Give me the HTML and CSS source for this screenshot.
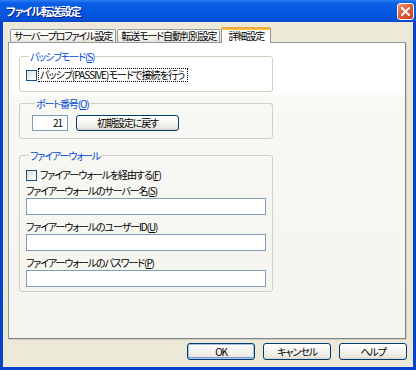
FILE: index.html
```html
<!DOCTYPE html>
<html lang="ja">
<head>
    <meta charset="UTF-8">
    <title>ファイル転送設定</title>
    <link rel="stylesheet" href="styles.css">
</head>
<body>
    <div class="window">
        <div class="titlebar">
            <span class="title">ファイル転送設定</span>
            <span class="close">
                <svg width="9" height="9" viewBox="0 0 9 9"><path d="M1 1L8 8M8 1L1 8" stroke="#fff" stroke-width="2" stroke-linecap="square"/></svg>
            </span>
        </div>
        <div class="client">
            <div class="tabs">
                <div class="tab">サーバープロファイル設定</div>
                <div class="tab">転送モード自動判別設定</div>
                <div class="tab active">詳細設定</div>
            </div>
            <div class="page">
                <fieldset class="group g-passive">
                    <legend>パッシブモード(<u>S</u>)</legend>
                    <div class="check-row">
                        <span class="check"></span>
                        <span class="check-label focused">パッシブ(PASSIVE)モードで接続を行う</span>
                    </div>
                </fieldset>
                <fieldset class="group g-port">
                    <legend>ポート番号(<u>O</u>)</legend>
                    <div class="port-row">
                        <div class="port-input">21</div>
                        <div class="btn btn-reset">初期設定に戻す</div>
                    </div>
                </fieldset>
                <fieldset class="group g-fw">
                    <legend>ファイアーウォール</legend>
                    <div class="check-row">
                        <span class="check"></span>
                        <span class="check-label">ファイアーウォールを経由する(<u>F</u>)</span>
                    </div>
                    <div class="field first">
                        <div class="field-label">ファイアーウォールのサーバー名(<u>S</u>)</div>
                        <div class="text-input"></div>
                    </div>
                    <div class="field">
                        <div class="field-label">ファイアーウォールのユーザーID(<u>U</u>)</div>
                        <div class="text-input"></div>
                    </div>
                    <div class="field">
                        <div class="field-label">ファイアーウォールのパスワード(<u>P</u>)</div>
                        <div class="text-input"></div>
                    </div>
                </fieldset>
            </div>
            <div class="buttons">
                <div class="btn btn-default">OK</div>
                <div class="btn">キャンセル</div>
                <div class="btn">ヘルプ</div>
            </div>
        </div>
    </div>
</body>
</html>
```

FILE: styles.css
```css
* {
    box-sizing: border-box;
}
body {
    margin: 0;
    background-color: #fff;
    font-family: 'Noto Sans CJK JP', 'Liberation Sans', sans-serif;
    font-size: 10px;
    letter-spacing: -1.1px;
    font-feature-settings: "palt";
    color: #000;
}
u {
    text-decoration: underline;
    text-underline-offset: 1px;
}
.window {
    width: 416px;
    height: 370px;
    display: flex;
    flex-direction: column;
    background-color: #0842d0;
}
.titlebar {
    height: 22px;
    display: flex;
    align-items: center;
    justify-content: space-between;
    padding: 0 2px 0 6px;
    background: linear-gradient(#2b7ff4 0, #0a5fe6 3px, #0456e0 60%, #0650d6 90%, #0b47c8 100%);
}
.title {
    color: #fff;
    font-weight: bold;
    font-size: 11px;
    letter-spacing: -1.1px;
    text-shadow: 1px 1px 0 #0a1e8a;
}
.close {
    width: 17px;
    height: 17px;
    display: flex;
    align-items: center;
    justify-content: center;
    border: 1px solid #fff;
    border-radius: 3px;
    background: linear-gradient(135deg, #f09a7e 0, #e2613d 40%, #c8401c 100%);
    margin-top: 1px;
}
.client {
    flex: 1;
    margin: 0 3px 3px 3px;
    background-color: #ece9d8;
    display: flex;
    flex-direction: column;
    padding: 5px 7px 0 5px;
}
.tabs {
    display: flex;
    align-items: flex-end;
    height: 15px;
    padding-left: 2px;
    position: relative;
    z-index: 1;
}
.tab {
    height: 13px;
    line-height: 12px;
    padding: 0 3px;
    margin-right: 1px;
    border: 1px solid #919b9c;
    border-bottom: none;
    border-radius: 2px 2px 0 0;
    background: linear-gradient(#fff, #f3f2ec 70%, #e6e4da);
    white-space: nowrap;
}
.tab.active {
    height: 16px;
    line-height: 14px;
    margin-left: 0;
    margin-bottom: -1px;
    padding: 0 6px;
    background: #fff;
    border-top: 2px solid #f2a83c;
    box-shadow: inset 0 1px 0 #ffc83c;
}
.page {
    height: 297px;
    border: 1px solid #919b9c;
    border-right-color: #7f8789;
    border-bottom-color: #7f8789;
    box-shadow: 1px 1px 0 #d0cdc0;
    background: linear-gradient(#fff 0, #fff 50px, #f8f8f4 54px, #f5f4ef 100%);
    padding: 7px 0 0 10px;
}
.group {
    width: 254px;
    margin: 0;
    border: 1px solid #d0d0bf;
    border-radius: 3px;
    padding: 0 6px;
}
.group legend {
    color: #0046d5;
    line-height: 13px;
    padding: 0 1px;
    margin-left: 3px;
}
.g-passive {
    padding-top: 5px;
    padding-bottom: 9px;
}
.g-port {
    margin-top: 5px;
    padding: 5px 6px 7px 12px;
}
.g-fw {
    margin-top: 10px;
    padding-top: 6px;
    padding-bottom: 4px;
}
.check-row {
    display: flex;
    align-items: center;
    height: 14px;
}
.check {
    width: 11px;
    height: 11px;
    border: 1px solid #1c5180;
    background: linear-gradient(135deg, #dcdcd7, #fff);
    margin-right: 1px;
    flex: none;
}
.check-label {
    line-height: 12px;
    padding: 0 2px 0 1px;
    border: 1px dotted transparent;
}
.check-label.focused {
    border-color: #000;
    letter-spacing: -0.9px;
}
.port-row {
    display: flex;
    align-items: center;
    gap: 8px;
}
.port-input {
    width: 36px;
    height: 16px;
    line-height: 14px;
    border: 1px solid #7f9db9;
    background: #fff;
    text-align: right;
    padding-right: 5px;
}
.btn {
    height: 17px;
    line-height: 15px;
    text-align: center;
    border: 1px solid #003c74;
    border-radius: 3px;
    background: linear-gradient(#fff 0, #f4f3ee 50%, #ece9df 85%, #d7d2c6 100%);
}
.btn-reset {
    width: 103px;
    height: 16px;
    line-height: 14px;
}
.field.first {
    margin-top: 2px;
}
.field {
    margin-top: 5px;
}
.field-label {
    line-height: 14px;
}
.text-input {
    width: 240px;
    height: 17px;
    border: 1px solid #7f9db9;
    background: #fff;
}
.buttons {
    display: flex;
    justify-content: flex-end;
    gap: 8px;
    padding-top: 4px;
    margin-right: -1px;
}
.buttons .btn {
    width: 68px;
}
.btn-default {
    box-shadow: inset 0 0 0 1px #a8c0ec, inset 0 -1px 0 1px #7c9fe0;
}
```
